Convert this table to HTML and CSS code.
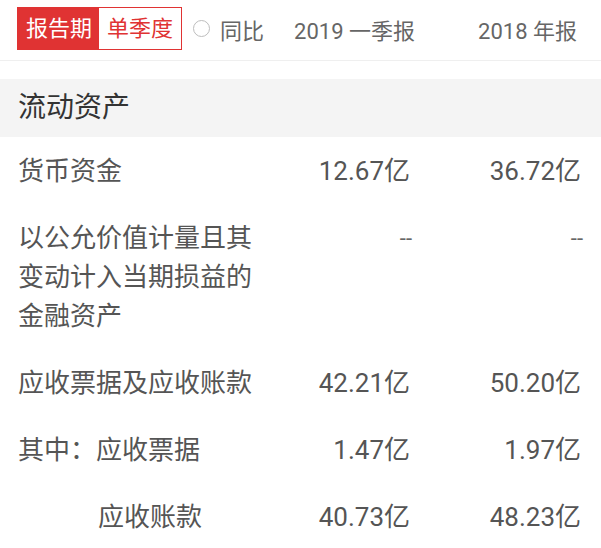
FILE: index.html
```html
<!DOCTYPE html>
<html lang="zh-CN">
<head>
<meta charset="utf-8">
<link rel="stylesheet" href="styles.css">
</head>
<body>
<div class="page">
  <header class="top">
    <div class="left">
      <div class="tabs">
        <span class="tab active">报告期</span>
        <span class="tab">单季度</span>
      </div>
      <span class="radio"></span>
      <span class="yoy">同比</span>
    </div>
    <div class="hcol c1">2019 一季报</div>
    <div class="hcol c2">2018 年报</div>
  </header>
  <div class="gap"></div>
  <div class="section">流动资产</div>
  <div class="table">
    <div class="row">
      <div class="label">货币资金</div>
      <div class="val">12.67亿</div>
      <div class="val">36.72亿</div>
    </div>
    <div class="row">
      <div class="label">以公允价值计量且其变动计入当期损益的金融资产</div>
      <div class="val dash">--</div>
      <div class="val dash">--</div>
    </div>
    <div class="row">
      <div class="label">应收票据及应收账款</div>
      <div class="val">42.21亿</div>
      <div class="val">50.20亿</div>
    </div>
    <div class="row">
      <div class="label">其中：应收票据</div>
      <div class="val">1.47亿</div>
      <div class="val">1.97亿</div>
    </div>
    <div class="row">
      <div class="label sub">应收账款</div>
      <div class="val">40.73亿</div>
      <div class="val">48.23亿</div>
    </div>
  </div>
</div>
</body>
</html>
```

FILE: styles.css
```css
* { box-sizing: border-box; }
html, body { margin: 0; padding: 0; background: #fff; }
body {
  font-family: Roboto, "Noto Sans CJK SC", sans-serif;
  color: #555;
  overflow: hidden;
}
.page { width: 601px; }

.top {
  display: flex;
  align-items: center;
  height: 61px;
  padding: 0 24px 3px 17px;
  border-bottom: 1px solid #efefef;
  font-size: 22px;
  color: #666;
}
.left { flex: 1; display: flex; align-items: center; }
.tabs {
  display: flex;
  border: 1px solid #e03333;
  height: 43px;
}
.tab {
  display: block;
  height: 41px;
  line-height: 41px;
  padding: 0 8px;
  color: #e03333;
  font-size: 22px;
  background: #fff;
}
.tab.active { background: #e03333; color: #fff; padding: 0 7px 0 8px; }
.radio {
  width: 17px;
  height: 17px;
  border: 1px solid #bdbdbd;
  border-radius: 50%;
  margin: 0 10px 0 11px;
}
.yoy { color: #666; }
.hcol { text-align: right; white-space: nowrap; }
.hcol.c1 { width: 150px; }
.hcol.c2 { width: 162px; }

.gap { height: 18px; }
.section {
  height: 58px;
  line-height: 58px;
  background: #f4f4f4;
  padding-left: 18px;
  font-size: 28px;
  color: #333;
}

.table { padding: 0 20px 0 18px; }
.row {
  display: grid;
  grid-template-columns: 242px 150px 171px;
  padding: 15px 0 13px;
  font-size: 26px;
  line-height: 39px;
}
.label { color: #555; }
.label.sub { padding-left: 80px; }
.val { text-align: right; color: #555; }
.val.dash { font-size: 22px; color: #666; margin-right: -2px; }
```
